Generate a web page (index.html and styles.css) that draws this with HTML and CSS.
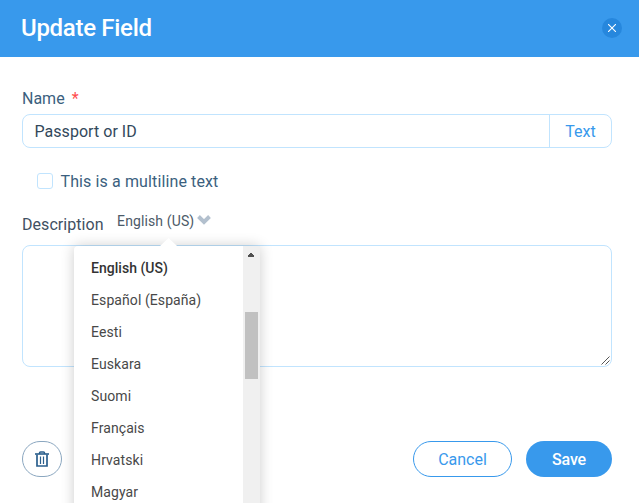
FILE: index.html
```html
<!DOCTYPE html>
<html lang="en">
<head>
<meta charset="utf-8">
<title>Update Field</title>
<link rel="stylesheet" href="styles.css">
</head>
<body>
<div class="dialog">
  <header class="header">
    <h1 class="title"><span>Update Field</span></h1>
    <button class="close" aria-label="Close"><svg width="8" height="8" viewBox="0 0 8 8"><path d="M0 0l8 8M8 0L0 8" stroke="#fff" stroke-width="1.1"/></svg></button>
  </header>
  <main class="body">
    <div class="label name-label"><span>Name</span><span class="required">*</span></div>
    <div class="input-group">
      <div class="value"><span>Passport or ID</span></div>
      <div class="type"><span>Text</span></div>
    </div>
    <div class="check"><i class="box"></i><span class="check-text">This is a multiline text</span></div>
    <div class="description">
      <span class="desc-label">Description</span>
      <div class="language">
        <span class="lang-current">English (US)</span>
        <svg class="chevron" width="14" height="10" viewBox="0 0 14 10"><path d="M1.500 1.500L7 7l5.500-5.500" fill="none" stroke="#b3c0ce" stroke-width="3.900"/></svg>
        <div class="menu">
          <ul class="options">
            <li class="selected"><span>English (US)</span></li>
            <li><span>Español (España)</span></li>
            <li><span>Eesti</span></li>
            <li><span>Euskara</span></li>
            <li><span>Suomi</span></li>
            <li><span>Français</span></li>
            <li><span>Hrvatski</span></li>
            <li><span>Magyar</span></li>
          </ul>
          <div class="scrollbar">
            <svg class="up" width="6" height="4" viewBox="0 0 6 4" shape-rendering="crispEdges"><path d="M2 0h2v1h1v1h1v2H0V2h1V1h1z" fill="#505050"/></svg>
            <div class="thumb"></div>
          </div>
        </div>
      </div>
    </div>
    <div class="textarea">
      <svg class="grip" width="9" height="9" viewBox="0 0 9 9"><path d="M.5 8.500l8-8M4.500 8.500l4-4" stroke="#555" stroke-width="1"/></svg>
    </div>
    <footer class="actions">
      <button class="btn trash" aria-label="Delete"><svg width="14" height="16" viewBox="0 0 14 16" fill="none" stroke="#2b5f8d"><path d="M0 3h14" stroke-width="1.600"/><path d="M4.500 3V2q0-1 1-1h3q1 0 1 1v1" stroke-width="1.500"/><path d="M2 3.500V15h10V3.500" stroke-width="1.700"/><path d="M5.500 5.500V13M8.500 5.500V13" stroke-width="1.200"/></svg></button>
      <button class="btn cancel"><span>Cancel</span></button>
      <button class="btn save"><span>Save</span></button>
    </footer>
  </main>
</div>
</body>
</html>
```
FILE: styles.css
```css
* { box-sizing: border-box; }
body {
  margin: 0;
  background: #fff;
  font: 16px/20px Roboto, sans-serif;
  color: #3b5f7e;
}
button { font: inherit; padding: 0; border: 0; }
svg { display: block; flex: none; }
.dialog { height: 503px; overflow: hidden; }
.header {
  height: 57px;
  padding: 0 17px 2px 21px;
  display: flex;
  align-items: center;
  justify-content: space-between;
  background: #3899ec;
}
.title { margin: 0; font-size: 24px; line-height: 28px; font-weight: 500; letter-spacing: -.3px; color: #fff; }
.close {
  width: 20px;
  height: 20px;
  border-radius: 50%;
  display: grid;
  place-items: center;
  background: #2687dd;
}
.body { padding: 32px 27px 0 22px; }
.label { height: 25px; display: flex; gap: 7px; }
.required { color: #ff4d4d; }
.input-group {
  height: 34px;
  display: flex;
  border: 1px solid #c1e4fe;
  border-radius: 8px;
}
.value { flex: 1; padding: 7px 11.500px; color: #32485b; letter-spacing: .04px; }
.type {
  width: 62px;
  padding-top: 7px;
  border-left: 1px solid #c1e4fe;
  text-align: center;
  color: #3899ec;
}
.check { margin: 23px 0 0 15px; display: flex; align-items: center; gap: 7.500px; }
.check-text { height: 20px; line-height: 22px; letter-spacing: .12px; }
.box { width: 16px; height: 16px; border: 1px solid #c1e4fe; border-radius: 3px; }
.description { height: 54px; padding-top: 20px; display: flex; gap: 13.500px; }
.desc-label { padding-top: 4px; color: #3f5062; letter-spacing: .05px; }
.language {
  position: relative;
  height: 20px;
  display: flex;
  font-size: 14px;
  letter-spacing: .12px;
  color: #4c5a68;
}
.chevron { margin: 4px 0 0 3px; }
.menu {
  position: absolute;
  z-index: 1;
  top: 35px;
  left: -43px;
  width: 186px;
  height: 280px;
  display: flex;
  background: #fff;
  border-radius: 4px;
  box-shadow: 0 0 14px rgba(0, 0, 0, .2);
}
.menu::before {
  content: "";
  position: absolute;
  top: -8px;
  left: 86px;
  width: 17px;
  height: 8px;
  background: #fff;
  clip-path: polygon(50% 0, 100% 100%, 0 100%);
}
.options { flex: 1; margin: 0; padding: 6px 17px; list-style: none; color: #484848; letter-spacing: .08px; }
.options li { height: 32px; line-height: 32px; white-space: nowrap; }
.options .selected { font-weight: 500; color: #333; letter-spacing: .02px; }
.scrollbar { width: 17px; padding: 7px 2px 0; background: #f0f0f0; }
.up { margin: 0 0 0 3px; }
.thumb { height: 67px; margin-top: 55px; background: #c1c1c1; }
.textarea {
  height: 122px;
  padding: 0 1px 1px 0;
  display: flex;
  align-items: flex-end;
  justify-content: flex-end;
  border: 1px solid #c1e4fe;
  border-radius: 8px;
}
.actions { margin-top: 74px; display: flex; gap: 14px; }
.btn { height: 36px; border-radius: 18px; display: grid; place-items: center; background: #fff; }
.trash { width: 40px; margin-right: auto; border: 1px solid #8ba7c0; padding-right: 1px; }
.cancel { width: 99px; border: 1px solid #3899ec; color: #3899ec; padding-top: 2px; }
.save { width: 86px; background: #3899ec; color: #fff; font-weight: 500; letter-spacing: -.1px; padding-top: 1px; }
```
